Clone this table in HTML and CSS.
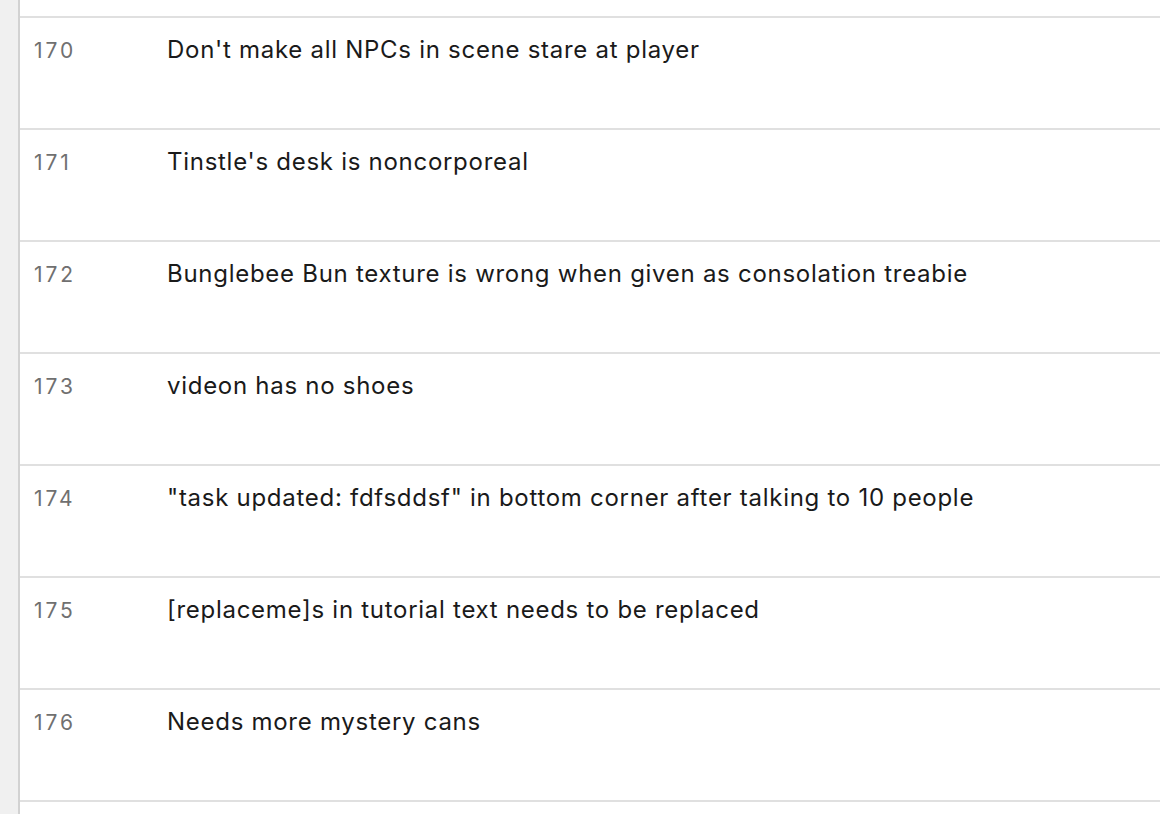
FILE: index.html
```html
<!DOCTYPE html>
<html>
<head>
<meta charset="utf-8">
<link rel="stylesheet" href="styles.css">
</head>
<body>
<div class="page">
  <div class="sidebar"></div>
  <div class="table">
    <div class="row"><div class="num">170</div><div class="title">Don't make all NPCs in scene stare at player</div></div>
    <div class="row"><div class="num">171</div><div class="title">Tinstle's desk is noncorporeal</div></div>
    <div class="row"><div class="num">172</div><div class="title">Bunglebee Bun texture is wrong when given as consolation treabie</div></div>
    <div class="row"><div class="num">173</div><div class="title">videon has no shoes</div></div>
    <div class="row"><div class="num">174</div><div class="title">"task updated: fdfsddsf" in bottom corner after talking to 10 people</div></div>
    <div class="row"><div class="num">175</div><div class="title">[replaceme]s in tutorial text needs to be replaced</div></div>
    <div class="row"><div class="num">176</div><div class="title">Needs more mystery cans</div></div>
    <div class="row"><div class="num"></div><div class="title"></div></div>
  </div>
</div>
</body>
</html>
```

FILE: styles.css
```css
html, body {
  margin: 0;
  padding: 0;
  background: #ffffff;
  height: 100%;
  overflow: hidden;
}
.page {
  display: flex;
  height: 814px;
  font-family: Inter, "Noto Sans", "Liberation Sans", sans-serif;
}
.sidebar {
  width: 18px;
  flex: none;
  background: #f0f0f0;
  border-right: 2px solid #d2d2d2;
}
.table {
  flex: 1;
  padding-top: 16px;
  overflow: hidden;
}
.row {
  display: flex;
  height: 110px;
  border-top: 2px solid #e0e0e0;
  box-sizing: content-box;
}
.num {
  width: 133px;
  flex: none;
  padding-left: 14px;
  padding-top: 20px;
  font-size: 21px;
  line-height: 26px;
  letter-spacing: 2.9px;
  color: #707070;
}
.title {
  padding-top: 18px;
  font-size: 24px;
  line-height: 28px;
  letter-spacing: 0.72px;
  color: #1a1a1a;
  white-space: nowrap;
}
```
